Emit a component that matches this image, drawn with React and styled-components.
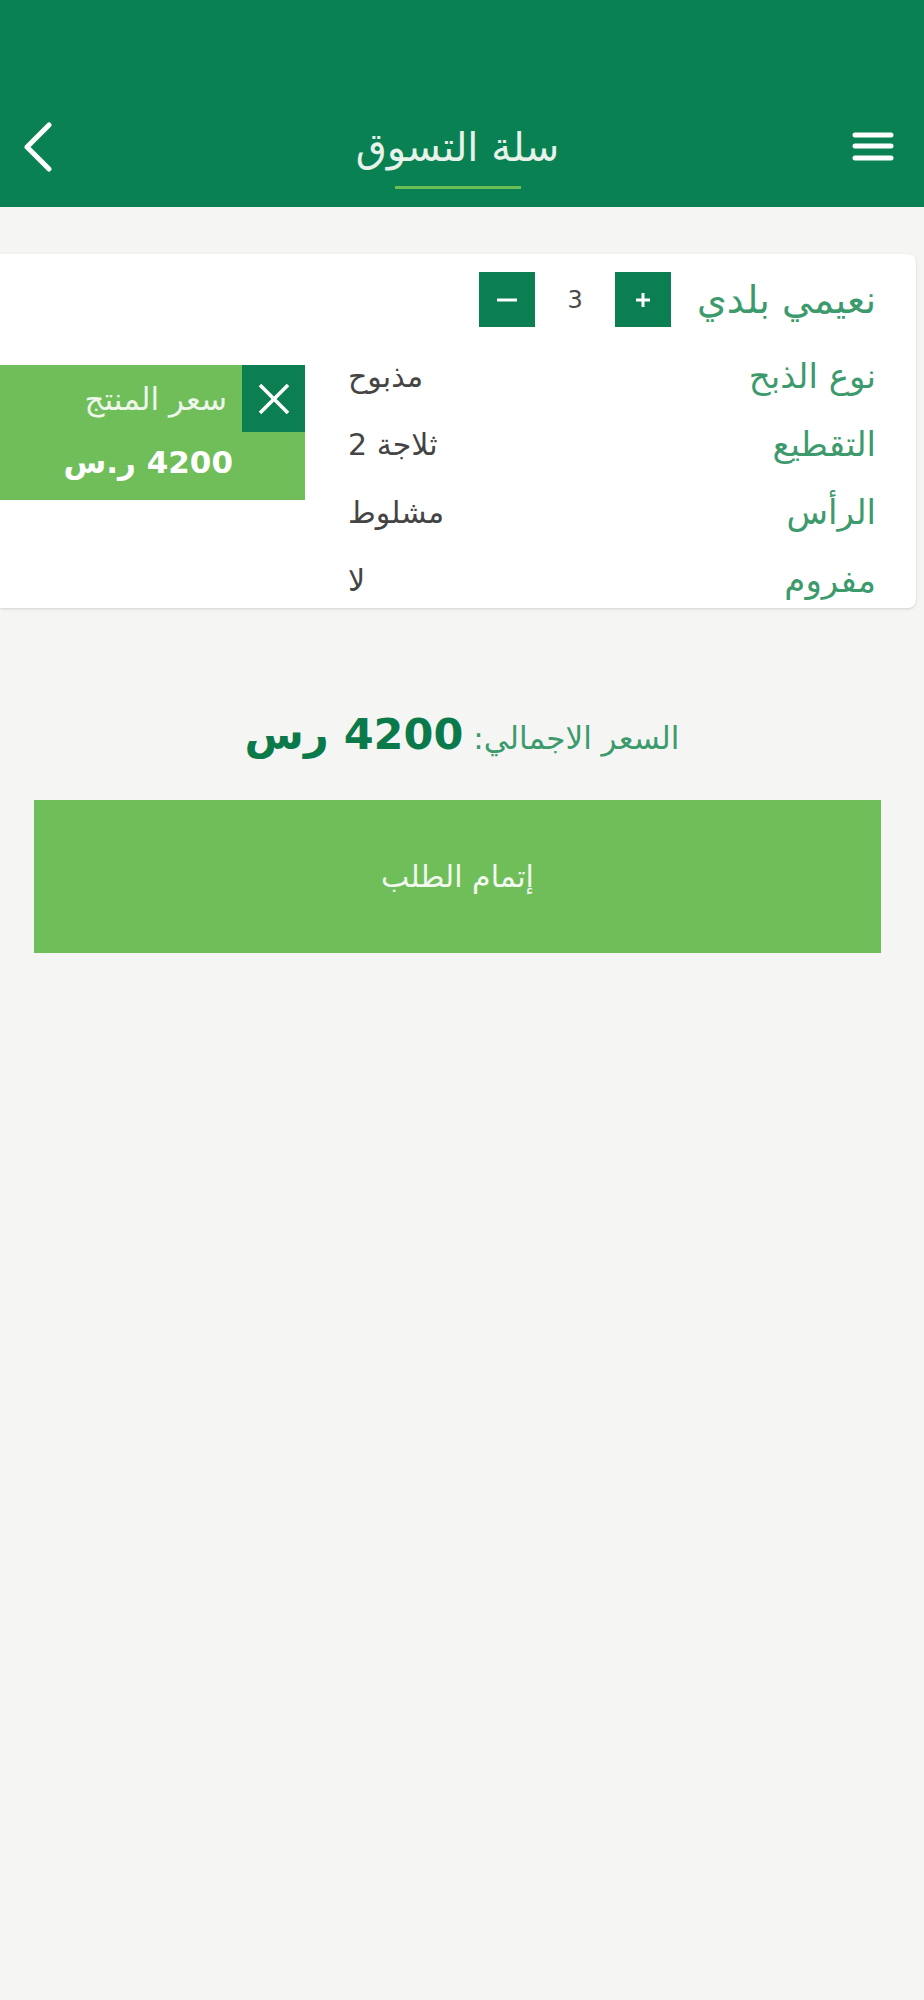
import React from "react";
import styled, { createGlobalStyle } from "styled-components";

const Global = createGlobalStyle`
  html, body { margin: 0; padding: 0; background: #f5f5f4; }
  body { font-family: "DejaVu Sans", "Noto Sans", sans-serif; }
  * { box-sizing: border-box; }
`;

const Page = styled.div`
  direction: rtl;
  min-height: 2000px;
  background: #f5f5f4;
`;

const Header = styled.header`
  height: 207px;
  background: #0a8153;
  display: flex;
  align-items: flex-start;
  justify-content: space-between;
  padding: 120px 30px 0 23px;
`;

const IconBtn = styled.button`
  background: none;
  border: 0;
  padding: 0;
  height: 54px;
  display: flex;
  align-items: center;
  justify-content: center;
  color: #fff;
`;

const TitleBlock = styled.div`
  display: flex;
  flex-direction: column;
  align-items: center;
  margin-left: 10px;
`;

const Title = styled.h1`
  margin: 0;
  font-size: 40px;
  font-weight: 400;
  color: #e6f2ea;
  line-height: 54px;
`;

const Underline = styled.div`
  width: 126px;
  height: 3px;
  background: #6cbf56;
  margin-top: 12px;
`;

const Card = styled.section`
  margin: 47px 8px 0 0;
  background: #fff;
  border-radius: 0 8px 8px 0;
  box-shadow: 0 1px 3px rgba(0, 0, 0, 0.15);
  padding: 18px 40px 8px 0;
`;

const NameRow = styled.div`
  display: flex;
  align-items: center;
  height: 55px;
`;

const Name = styled.span`
  font-size: 38px;
  color: #3c9a6c;
  margin-left: 26px;
`;

const QtyBtn = styled.button`
  width: 56px;
  height: 55px;
  border: 0;
  padding: 0;
  background: #0c7f52;
  color: #fff;
  display: flex;
  align-items: center;
  justify-content: center;
`;

const Count = styled.span`
  width: 80px;
  text-align: center;
  font-size: 24px;
  color: #4a4a4a;
`;

const DetailArea = styled.div`
  display: flex;
  align-items: flex-start;
  margin-top: 29px;
`;

const Table = styled.div`
  flex: 1;
  display: flex;
  flex-direction: column;
  gap: 28px;
  margin-left: 43px;
`;

const Row = styled.div`
  display: flex;
  justify-content: space-between;
  align-items: center;
  height: 40px;
`;

const Label = styled.span`
  font-size: 34px;
  color: #3c9a6c;
`;

const Value = styled.span`
  font-size: 30px;
  color: #444;
`;

const PriceBox = styled.div`
  width: 305px;
  height: 135px;
  margin-top: 9px;
  background: #6fbe5a;
  display: flex;
  flex-direction: column;
`;

const PriceTop = styled.div`
  display: flex;
  align-items: center;
  height: 67px;
`;

const CloseBtn = styled.button`
  width: 63px;
  height: 67px;
  border: 0;
  padding: 0;
  background: #0c7f52;
  color: #fff;
  display: flex;
  align-items: center;
  justify-content: center;
`;

const PriceLabel = styled.span`
  font-size: 31px;
  color: #eef7ea;
  margin-right: 15px;
`;

const PriceAmount = styled.div`
  font-size: 31px;
  font-weight: 700;
  color: #fff;
  padding-right: 72px;
  line-height: 60px;
`;

const Total = styled.div`
  margin-top: 101px;
  text-align: center;
  font-size: 31px;
  color: #3c9a6c;
  line-height: 50px;
  height: 50px;
`;

const TotalValue = styled.b`
  font-size: 43px;
  font-weight: 700;
  color: #0b7a4b;
  line-height: 50px;
`;

const Submit = styled.button`
  display: block;
  margin: 41px 43px 0 34px;
  width: calc(100% - 77px);
  height: 153px;
  border: 0;
  background: #6fbe5a;
  color: #f2f9ee;
  font-family: inherit;
  font-size: 30px;
`;

export default function App() {
  const rows = [
    ["نوع الذبح", "مذبوح"],
    ["التقطيع", "ثلاجة 2"],
    ["الرأس", "مشلوط"],
    ["مفروم", "لا"],
  ];
  return (
    <Page>
      <Global />
      <Header>
        <IconBtn aria-label="menu">
          <svg width="42" height="30" viewBox="0 0 42 30">
            <g stroke="#fff" strokeWidth="5" strokeLinecap="round">
              <line x1="3" y1="3" x2="39" y2="3" />
              <line x1="3" y1="14" x2="39" y2="14" />
              <line x1="3" y1="26" x2="39" y2="26" />
            </g>
          </svg>
        </IconBtn>
        <TitleBlock>
          <Title>سلة التسوق</Title>
          <Underline />
        </TitleBlock>
        <IconBtn aria-label="back">
          <svg width="30" height="50" viewBox="0 0 30 50">
            <polyline
              points="26,3 4,25 26,47"
              fill="none"
              stroke="#fff"
              strokeWidth="5"
              strokeLinecap="round"
              strokeLinejoin="round"
            />
          </svg>
        </IconBtn>
      </Header>

      <Card>
        <NameRow>
          <Name>نعيمي بلدي</Name>
          <QtyBtn aria-label="plus">
            <svg width="18" height="18" viewBox="0 0 18 18">
              <g stroke="#fff" strokeWidth="3">
                <line x1="9" y1="2" x2="9" y2="16" />
                <line x1="2" y1="9" x2="16" y2="9" />
              </g>
            </svg>
          </QtyBtn>
          <Count>3</Count>
          <QtyBtn aria-label="minus">
            <svg width="22" height="18" viewBox="0 0 22 18">
              <line x1="1" y1="9" x2="21" y2="9" stroke="#fff" strokeWidth="3" />
            </svg>
          </QtyBtn>
        </NameRow>
        <DetailArea>
          <Table>
            {rows.map(([l, v]) => (
              <Row key={l}>
                <Label>{l}</Label>
                <Value>{v}</Value>
              </Row>
            ))}
          </Table>
          <PriceBox>
            <PriceTop>
              <CloseBtn aria-label="remove">
                <svg width="32" height="32" viewBox="0 0 32 32">
                  <g stroke="#fff" strokeWidth="3.5">
                    <line x1="2" y1="2" x2="30" y2="30" />
                    <line x1="30" y1="2" x2="2" y2="30" />
                  </g>
                </svg>
              </CloseBtn>
              <PriceLabel>سعر المنتج</PriceLabel>
            </PriceTop>
            <PriceAmount>4200 ر.س</PriceAmount>
          </PriceBox>
        </DetailArea>
      </Card>

      <Total>
        السعر الاجمالي: <TotalValue>4200 رس</TotalValue>
      </Total>
      <Submit>إتمام الطلب</Submit>
    </Page>
  );
}
